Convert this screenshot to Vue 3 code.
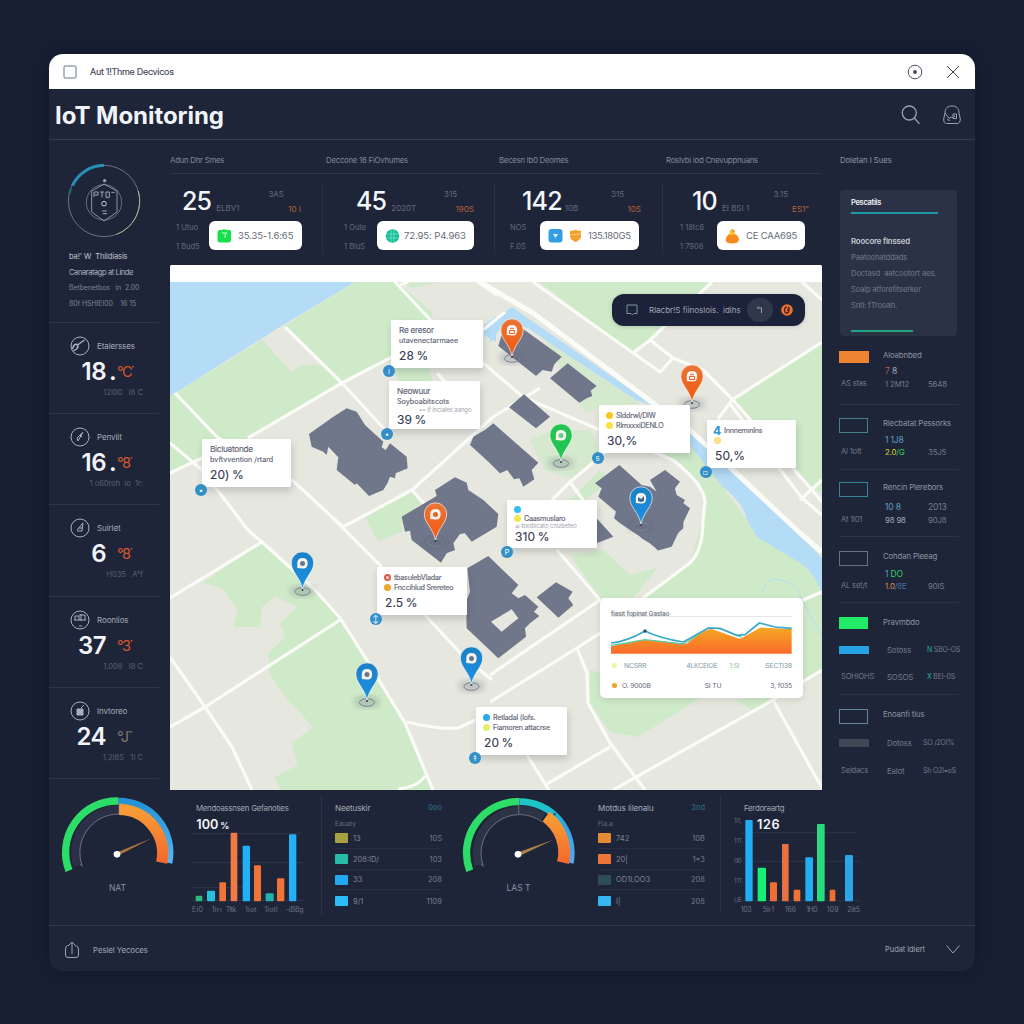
<script setup>
const stats = [
  { n: '25', sub: 'ELBV1', a: '3AS', b: '10 I', l1: '1 Utuo', l2: '1 Bud5', chip: '35.35-1.6:65', icons: ['green'] },
  { n: '45', sub: '2020T', a: '315', b: '190S', l1: '1 Oute', l2: '1 BluS', chip: '72.95: P4.963', icons: ['teal'] },
  { n: '142', sub: '10B', a: '315', b: '10S', l1: 'NOS', l2: 'F.0S', chip: '135.180G5', icons: ['blue', 'shield'] },
  { n: '10', sub: 'EI BSI 1', a: '3.15', b: 'ES1"', l1: '1 18tc6', l2: '1 7908', chip: 'CE CAA695', icons: ['flame'] }
]
const heads = ['Adun Dhr Smes', 'Deccone 16 FiOvhumes', 'Becesn lb0 Deomes', 'Roslvbi lod Cnevuppnuans']

const metrics = [
  { name: 'Etalersses', v: '18', dot: '.', u: '°C˙', sub: '12I00   I8 C', icon: 'needle' },
  { name: 'Penvlit', v: '16', dot: '.', u: '°8˙', sub: '1 o60roh  io  1r:', icon: 'pen' },
  { name: 'Suirlet', v: '6', dot: '', u: '°8˙', sub: 'H035   A°f', icon: 'flask' },
  { name: 'Roonlios', v: '37', dot: '', u: '°3˙', sub: '1,008   I8 C', icon: 'grid' },
  { name: 'Invtoreo', v: '24', dot: '', u: '°J˙˙', sub: '1,2I8S   1I C', icon: 'cup', grey: true }
]

const groups = [
  { cls: 'g1', title: 'Aloabnbed', v: [['7', 'red'], [' 8', 'lite']], l: 'AS stas', m: [['1 2M12', '']], r: '5648', sw: 'fill-orange' },
  { cls: 'g2', title: 'Rlecbatat Pessorks', v: [['1 1J8', 'sky']], l: 'Al 1ott', m: [['2.0', 'yel'], ['/G', 'grn']], r: '35J5', sw: 'line-teal' },
  { cls: 'g3', title: 'Rencin Plerebors', v: [['10 8', 'sky']], vr: '2013', l: 'At 1l01', m: [['98 98', 'lite']], r: '90J8', sw: 'line-cyan' },
  { cls: 'g4', title: 'Cohdan Pleeag', v: [['1 ', 'sky'], ['DO', 'grn']], l: 'AL set/t', m: [['1.0', 'org'], ['/8E', 'blu']], r: '90IS', sw: 'line-grey' }
]

const callouts = [
  { x: 391, y: 320, w: 92, a: 'Re eresor', b: 'utavenectarmaee', v: '28 %', dot: [389, 371], g: 'ı' },
  { x: 389, y: 381, w: 91, a: 'Neowuur', b: 'Soyboabitscots', c: '•• if incialex.aango', v: '39 %', dot: [387, 434], g: '•' },
  { x: 202, y: 439, w: 89, a: 'Bicluatonde', b: 'bvftvvention /rtard', v: '20) %', dot: [201, 490], g: '▪' },
  { x: 599, y: 405, w: 91, a: 'Slddrwl/DIW', b: 'RlmxxxiDENLO', v: '30,%', dot: [597.5, 458], g: 's', i: ['#f7c51d', '#fbe23c'] },
  { x: 707, y: 420, w: 89, a: 'Innnemınlns', b: ' ', v: '50,%', dot: [705.5, 472], g: '▫', i: ['four', '#fbe08a'] },
  { x: 507, y: 500, w: 90, a: ' ', b: 'Caasmuslaro', c: '≡ bxobicato cnulseteo', v: '310 %', dot: [507, 552], g: 'P', i: ['#35bdf0', '#f3e84e'], tall: true },
  { x: 377, y: 567, w: 90, a: 'tbasulebVladar', b: 'Fnccihlud Srereteo', v: '2.5 %', dot: [375.5, 619], g: '↕', i: ['ring', '#efa629'] },
  { x: 476, y: 707, w: 91, a: 'Retladal (lofs.', b: 'Fiamoren attacrse', v: '20 %', dot: [475, 758], g: '‡', i: ['#2aabe2', '#e6ef6a'] }
]

const pins = [
  { x: 512, y: 357, c: 'url(#po)', h: 'lock' },
  { x: 692, y: 403, c: 'url(#po)', h: 'lock' },
  { x: 561, y: 462, c: '#25c452', h: 'drop' },
  { x: 641, y: 525, c: 'url(#pb)', h: 'leaf' },
  { x: 435.5, y: 541, c: 'url(#po)', h: 'ring' },
  { x: 302.5, y: 590, c: 'url(#pb)', h: 'drop' },
  { x: 367, y: 701, c: 'url(#pb)', h: 'drop' },
  { x: 471.5, y: 685, c: 'url(#pb)', h: 'drop' }
]

const bars1 = [
  [452, 20, 331, '#2db87c'], [486, 24, 316, '#27c0dc'], [523, 20, 291, '#ef7437'], [557, 20, 142, '#f17a44'], [593, 22, 181, '#22b0f8'],
  [627, 21, 240, '#ef7437'], [662, 24, 324, '#20b2b4'], [696, 22, 279, '#ef7437'], [732, 22, 147, '#22b0f8']
]
const bars2 = [
  [871, 22, 104, '#22aef4'], [908, 25, 247, '#17f078'], [945, 21, 291, '#ef6f33'], [981, 20, 176, '#e97040'], [1016, 20, 313, '#ef7437'],
  [1051, 23, 216, '#22aef4'], [1086, 23, 116, '#27dc7c'], [1124, 17, 313, '#ef6f33'], [1170, 24, 209, '#2ba6e8']
]
const x1 = [[441, 'Ei0', 33], [500, '1irı', 30], [542, 'Tltk', 32], [600, '1iot', 35], [658, '1lotl', 40], [722, '-iBBg', 54]]
const x2 = [[857, '103', 33], [923, '5lr1', 34], [989, '166', 34], [1054, '1H0', 34], [1115, '109', 36], [1177, '2iit5', 38]]
const y2 = [[107, '1i1,'], [166, '111'], [226, '0i0'], [286, '111'], [343, 'i,iE']]

const listA = [
  { c: '#a8a13f', n: '13', v: '10S' }, { c: '#26bda6', n: '208:ID/', v: '103' },
  { c: '#22a9f3', n: '33', v: '208' }, { c: '#2bbdf8', n: '9/1', v: '1109' }
]
const listB = [
  { c: '#e28b34', n: '742', v: '10B' }, { c: '#ef7437', n: '20|', v: '1*3' },
  { c: '#2f4d59', n: 'OD1I,OO3', v: '208' }, { c: '#36b5f5', n: 'I|', v: '208' }
]
</script>

<template>
  <div class="desk">
    <main class="window">
      <header class="titlebar">
        <svg width="14" height="14" viewBox="0 0 14 14"><rect x="1" y="1" width="12" height="12" rx="1" fill="none" stroke="#6b7280" /></svg>
        <span class="tb-text">Aut 1!Thme Decvicos</span>
        <svg class="push" width="16" height="16" viewBox="0 0 16 16"><circle cx="8" cy="8" r="6.8" fill="none" stroke="#4b5060" /><circle cx="8" cy="8" r="2" fill="#4b5060" /></svg>
        <svg class="close" width="14" height="14" viewBox="0 0 14 14"><path d="M1 1L13 13M13 1L1 13" stroke="#3d4250" fill="none" /></svg>
      </header>

      <div class="header">
        <h1>IoT Monitoring</h1>
        <svg class="push" width="20" height="20" viewBox="0 0 20 20" fill="none" stroke="#9aa0b2" stroke-width="1.3"><circle cx="8.3" cy="8" r="7" /><path d="M13.3 13L18.5 18.7" /></svg>
        <svg class="bag" width="18" height="20" viewBox="0 0 18 20" fill="none" stroke="#9aa0b2"><path d="M2 8C2 3 5 1 9 1S16 3 16 8L17.300 14C17.300 17 16 18.500 14 18.500H3.500C1.500 18.500 .7 17 .7 14Z" /><path d="M2 8L6 13.500 8 12 10 13V9H13.500V13.500H10M11.500 10.500V12M4 14.500L7 15.500" /></svg>
      </div>

      <div class="body">
        <aside class="left">
          <section class="profile">
            <svg width="74" height="76" viewBox="82 350 222 228" fill="none">
              <circle cx="190" cy="467" r="107" stroke="#6a7183" stroke-width="3" />
              <path d="M228 567A107 107 0 0 0 293 437" stroke="#a9b58f" stroke-width="3" />
              <path d="M95 421A107 107 0 0 1 190 360" stroke="#268fb4" stroke-width="9" />
              <path d="M86 447Q88 436 92 429" stroke="#1f6f6f" stroke-width="6" />
              <g stroke="#8d93a5" stroke-width="3"><path d="M190 416L229 437V500L190 527 153 500V437Z" /><circle cx="190" cy="471" r="53" stroke-width="2" /></g>
              <circle cx="192" cy="406" r="5" fill="#9aa0b0" /><circle cx="190" cy="475" r="7" stroke="#c9cdd8" stroke-width="3" />
              <path d="M160 455V440H172V449H162M178 440H190M184 440V456M196 440H206V456H196ZM212 441H222M184 497H198M186 505H199" stroke="#a0a5b5" stroke-width="3" />
            </svg>
            <p class="p1">ba!' W&nbsp; Thildiasis</p>
            <p class="p2">Canaratagp at Linde</p>
            <p class="p3">Betbenetbos&nbsp; &nbsp;in&nbsp; 2.00</p>
            <p class="p4">80f HSHIEI00&nbsp; &nbsp; 16 15</p>
          </section>
          <section v-for="m in metrics" :key="m.name" class="metric">
            <div class="m-head">
              <svg width="20" height="20" viewBox="0 0 20 20" fill="none" stroke="#aab0be">
                <circle cx="10" cy="10" r="9" />
                <path v-if="m.icon === 'needle'" d="M2.500 13Q4 7 7 8.500Q9 11 6.500 13L3.500 15M7.500 9L14.500 4" stroke-width="1.500" />
                <path v-else-if="m.icon === 'pen'" d="M8 14L13 5M10 8L12 10M8 14L7 11 12 6" />
                <path v-else-if="m.icon === 'flask'" d="M7 13H12L13 5L7 12M9 10H12" />
                <path v-else-if="m.icon === 'grid'" d="M5 10V6H9V10M11 4V11M9 5H15V10M4 10H16M9 16H12" />
                <path v-else d="M7 8H13V14H7ZM11 7L14 4" fill="#aab0be" />
              </svg>
              <span>{{ m.name }}</span>
            </div>
            <div class="m-val"><b>{{ m.v }}</b><i>{{ m.dot }}</i><em :class="{ grey: m.grey }">{{ m.u }}</em></div>
            <div class="m-sub">{{ m.sub }}</div>
          </section>
        </aside>

        <section class="center">
          <div class="heads"><span v-for="h in heads" :key="h">{{ h }}</span></div>
          <div class="stats">
            <div v-for="(s, k) in stats" :key="k" class="stat" :class="'s' + k">
              <div class="s-top">
                <span class="num">{{ s.n }}</span><span class="sub">{{ s.sub }}</span>
                <span class="pair"><span>{{ s.a }}</span><span class="org">{{ s.b }}</span></span>
              </div>
              <div class="s-bot">
                <div class="s-lab"><span>{{ s.l1 }}</span><span>{{ s.l2 }}</span></div>
                <div class="chip">
                  <svg v-for="i in s.icons" :key="i" width="15" height="16" viewBox="0 0 15 16">
                    <g v-if="i === 'green'"><path d="M2 2H5L7 1 9 2H13Q14.500 3 14 8V12Q14 14.500 11 14.500H3Q.5 14.500 .5 12V4Z" fill="#18e04a" /><path d="M5 5H10L8 7V10" stroke="#c9ffd6" fill="none" /></g>
                    <g v-else-if="i === 'teal'"><circle cx="7.500" cy="8" r="6.800" fill="#18bd94" /><path d="M6 1V14M9 1V14M1 6L14 6M1 10H14" stroke="#87e6cd" stroke-width=".7" /></g>
                    <g v-else-if="i === 'blue'"><rect x=".5" y="1" width="14" height="13.500" rx="3" fill="#359de4" /><path d="M5 6H10L7.500 10Z" fill="#e9f6ff" /></g>
                    <g v-else-if="i === 'shield'"><path d="M2 3L7 2 13 3V9Q12 12 7.500 14 3 12 2 9Z" fill="#f3a02c" /><path d="M2 7L13 6" stroke="#ffd083" /></g>
                    <g v-else><path d="M7.500 1L10 3 9 5Q14 8 14 12 13 15.500 7.500 15.500 1 15.500 .5 12 1 8 5.500 5L5 3Z" fill="#f58a1f" /><path d="M6 2L9 4 11 7H4Z" fill="#f8c12c" /></g>
                  </svg>
                  <span>{{ s.chip }}</span>
                </div>
              </div>
            </div>
          </div>

          <div class="map">
            <svg class="land" width="652" height="525" viewBox="170 265 652 525">
              <defs>
                <linearGradient id="po" x2="0" y2="1"><stop stop-color="#e97636" /><stop offset="1" stop-color="#f4560f" /></linearGradient>
                <linearGradient id="pb" x2="0" y2="1"><stop stop-color="#1c80c4" /><stop offset="1" stop-color="#1d91e4" /></linearGradient>
                <filter id="soft"><feGaussianBlur stdDeviation="3" /></filter>
              </defs>
              <rect x="170" y="265" width="652" height="525" fill="#e6e7de" />
              <path d="M170 282H355L283 325 175 393 170 396Z" fill="#b4dcf7" />
              <g fill="#cfeac8">
                <path d="M355 282H397L432 312V341L342 384 248 438 202 458 170 473V396L262 340 292 372 298 367Q310 362 328 368L284 326Z" />
                <path d="M392 362L428 368 433 380 400 384Z M405 284L412 288 440 282Z M540 282H712L633 354Z" />
                <path d="M365 517L410 491 421 503 403 518 402 532 378 541Z" />
                <path d="M260 542L203 583 222 588 238 610 233 627H260L262 607 275 597 298 607 280 623 285 637 268 653 270 675 288 700 313 727 292 743 298 765 275 777 280 790H431L405 723 368 662 340 618 315 590Z" />
                <path d="M540 330L560 350 640 403 600 408 585 412 562 370Z M530 440L552 430 590 430 600 450 575 480 545 470Z" opacity=".8" />
                <path d="M600 440L673 460 700 483 705 503 703 520 690 563 643 598H803L822 592V565L747 520 723 487 690 443Z M590 670L700 698 638 737 610 732 590 703Z M735 700L755 712 822 672V590H803V690Z" />
                <path d="M570 500L600 470 612 480 575 507Z M570 555L603 550 630 575 657 568 633 598H600Z M735 400L822 341V492L812 487Z" />
              </g>
              <path d="M490 322L512 307 640 396 650 405 636 400 560 350 528 328 505 322 490 343Z M687 428L705 440 822 558V592Q812 570 800 563L757 537 747 520Q745 505 723 487L690 445Z M484 325L496 316V342L484 335Z" fill="#b4dcf7" />
              <path d="M762 592Q766 575 782 580T802 600L822 636" stroke="#b4dcf7" fill="none" />
              <g fill="none" stroke="#fbfcf8" stroke-width="3.200" stroke-linejoin="round">
                <path d="M175 393L218 438 292 480 343 527 M285 327L342 383 387 432 M170 443L202 470 248 530 262 542 315 590 340 618 368 662 405 723 433 790 M170 473L202 458 M248 438L342 383 392 357 M170 598L262 542 M170 727L205 707 340 620 M170 657L205 707 232 747 252 790" />
                <path d="M334 519L378 563 427 617 462 655 492 680 M343 527L412 490 493 417 540 388 M412 490L425 505 M407 722Q440 730 458 728L480 718 M490 675L600 600 M643 598L690 563Q703 550 703 520L705 503Q705 485 673 460L600 430 523 397 483 363 438 328 395 282 M400 285L408 282 M437 373L470 408 M478 282L497 295 M483 330L505 312" />
                <path d="M533 282L660 372 673 358 M633 353L650 340 712 282 M650 340L673 358 703 370 732 399 812 490 822 502 M732 400L822 342 M732 400L718 419 M802 282L822 300 M730 404L802 498 822 515 M800 500L822 480" />
                <path d="M613 790L773 700 822 670 M773 700L822 788 M490 702L577 648 605 630 M577 648L587 673 588 703 610 743 645 790 M547 784L610 747 M527 755L549 790 M557 550L600 600 M803 600L822 592 M620 440L570 482 552 500 M570 482L583 500 M398 789Q418 787 425 776" />
                <path d="M478 281L533 313 653 403 690 430 800 533 822 552" stroke-width="5" />
              </g>
              <g fill="#70778b">
                <g transform="translate(165 260) scale(.33333)">
                  <path d="M545 445L575 455 600 495 655 545 650 562 662 570 675 550 725 590 728 625 692 640 690 655 675 650 668 668 655 690 612 708 575 670 570 675 515 630 520 592 490 560 485 585 475 575 440 560 432 522 505 470Z" />
                  <path d="M870 652L905 668 910 690 955 720 1000 762 995 800 920 845 900 820 885 822 865 850 870 870 845 880 828 908 740 840 735 812 720 815 710 770 815 708 810 690Z" />
                </g>
                <g transform="translate(490 270) scale(.33333)">
                  <path d="M90 170L215 260 193 283 185 305 158 300 138 318 25 228 35 195Z M233 280L320 348 302 362 307 378 290 385 268 398 180 325Z M102 373L180 440 138 475 57 412Z" />
                  <path d="M10 460L145 578 125 600 133 628 100 650 88 625 72 628 52 600 30 610 -5 575 -60 525 -50 500 -15 480Z" />
                  <path d="M388 585L455 645 480 650 500 665 480 630 525 600 570 635 555 655 560 675 585 690 580 700 600 715 545 830 510 840 390 760 372 745 378 725 325 680 335 655 315 640Z M320 745L370 800 320 820Z" />
                </g>
                <g transform="translate(490 520) scale(.33333)">
                  <path d="M198 187L248 215 235 235 250 255 205 293 140 232Z M410 0H580L580 25 505 92 480 70 455 55Z" />
                  <path d="M-68 145L-5 108 85 195 65 220 85 235 105 225 145 260 132 275 148 288 120 310 105 325 108 350 25 415 -70 325 -72 245 -60 215ZM65 268L3 305 35 335 85 295Z" fill-rule="evenodd" />
                </g>
              </g>
              <g v-for="(p, k) in pins" :key="k" :transform="`translate(${p.x} ${p.y})`">
                <ellipse cy="1" rx="13" ry="6" fill="#555d70" opacity=".28" filter="url(#soft)" />
                <ellipse rx="7.500" ry="3.800" cy="1.500" fill="none" stroke="#7b8292" stroke-width="1" />
                <path d="M0 -1C-3 -14-11.200 -18-11.200 -27A11.200 11.200 0 0 1 11.200 -27C11.200 -18 3 -14 0 -1Z" :fill="p.c" stroke="#fff" stroke-opacity=".65" stroke-width="1" />
                <path d="M-5.200 -22V-27Q-5 -32 0 -32T5.200 -27Q5.200 -21 0 -21.500Z" fill="#f7f3ee" />
                <path v-if="p.h === 'lock'" d="M-2 -28Q0 -30 2 -28M-2.500 -26.500H2.500V-23.500H-2.500Z" fill="none" stroke="#e8632a" />
                <circle v-else-if="p.h === 'ring'" cy="-26.500" r="2.500" fill="#e8632a" />
                <path v-else-if="p.h === 'leaf'" d="M-3 -24V-28L0 -26 3 -29V-24L0 -23Z" fill="#33669a" />
                <circle v-else cy="-26.500" r="2.500" :fill="p.c === '#25c452' ? '#5fcf80' : '#66788f'" />
                <circle cy="0" r="1" fill="#343b4d" />
              </g>
            </svg>
            <div class="strip"></div>

            <div v-for="(c, k) in callouts" :key="'c' + k" class="callout" :class="{ wide: !c.i, tall: c.tall, noted: c.c }" :style="{ left: c.x - 170 + 'px', top: c.y - 265 + 'px', width: c.w + 'px' }">
              <div class="row">
                <span v-if="c.i && c.i[0] === 'four'" class="four">4</span>
                <span v-else-if="c.i && c.i[0] === 'ring'" class="ring"></span>
                <span v-else-if="c.i" class="ball" :style="{ background: c.i[0] }"></span>
                <span>{{ c.a }}</span>
              </div>
              <div class="row r2">
                <span v-if="c.i" class="ball" :style="{ background: c.i[1] }"></span>
                <span>{{ c.b }}</span>
              </div>
              <div v-if="c.c" class="faint">{{ c.c }}</div>
              <div class="val">{{ c.v }}</div>
            </div>
            <span v-for="(c, k) in callouts" :key="'d' + k" class="tag" :style="{ left: c.dot[0] - 176 + 'px', top: c.dot[1] - 271 + 'px' }">{{ c.g }}</span>

            <div class="pill">
              <svg width="12" height="12" viewBox="0 0 12 12" fill="none" stroke="#7f93a8"><path d="M1 1H11V9.500H8L6.500 11 5 9.500H1Z" /></svg>
              <span>Rlacbr!S fiinoslois.&nbsp; idihs</span>
              <b><svg width="8" height="8" viewBox="0 0 8 8" fill="none" stroke="#9ca2b1"><path d="M1 2H5.500V7M2.500 .5L1 2" /></svg></b>
              <i><svg width="12" height="12" viewBox="0 0 12 12"><circle cx="6" cy="6" r="5.800" fill="#f0722f" /><path d="M6 3Q3.500 3 3.500 6T6 9Q8 9 8 6V3L6.500 7" stroke="#50251b" fill="none" stroke-width="1.300" /></svg></i>
            </div>

            <div class="mini">
              <div class="mini-head"><span>fiasit fopinat Gastao</span></div>
              <svg width="181" height="36" viewBox="363 295 543 108">
                <defs><linearGradient id="ar" x2="0" y2="1"><stop stop-color="#f5a821" /><stop offset="1" stop-color="#fb6a2c" /></linearGradient></defs>
                <path d="M363 380L410 370 465 360 560 370 590 372Q640 330 665 328L750 358 810 324 905 328V402H363Z" fill="url(#ar)" />
                <path d="M363 377L410 370 465 360 580 373 655 325 690 327 755 353" fill="none" stroke="#5fc9a0" stroke-width="4" />
                <path d="M363 370Q410 366 465 334 510 356 580 367L655 325 690 326 740 347 765 345 808 310 855 322 905 326" fill="none" stroke="#3ba7c9" stroke-width="5" />
                <circle cx="465" cy="334" r="5" fill="#28506a" />
              </svg>
              <div class="mini-row teal"><i class="pale"></i><span>NCSRR</span><span class="m2">4LKCEIOE</span><span class="m3">1:SI</span><span class="end">SECTI38</span></div>
              <div class="mini-row"><i class="amber"></i><span>O. 9000B</span><span class="m4">SI TU</span><span class="end">3, f035</span></div>
            </div>
          </div>
        </section>

        <aside class="right">
          <p class="r-head">Doletan I Sues</p>
          <div class="card">
            <b>Pescatils</b><hr />
            <strong>Roocore flnssed</strong>
            <p>Paatoohatddads</p><p class="w2">Doctasd&nbsp; aatcootort aes.</p><p class="w3">Soalp atforefitserker</p><p class="w4">Sntl: fTrooah.</p>
            <hr class="short" />
          </div>
          <section v-for="g in groups" :key="g.cls" class="group" :class="g.cls">
            <div class="swatch" :class="g.sw"></div>
            <div class="g-title">{{ g.title }}</div>
            <div class="g-v"><span><span v-for="(t, k) in g.v" :key="k" :class="t[1]">{{ t[0] }}</span></span><span class="gr">{{ g.vr }}</span></div>
            <div class="g-l">{{ g.l }}</div>
            <div class="g-m"><span><span v-for="(t, k) in g.m" :key="k" :class="t[1]">{{ t[0] }}</span></span><span class="gr">{{ g.r }}</span></div>
          </section>
          <section class="group g5">
            <div class="swatch fill-green"></div><div class="g-title">Pravmbdo</div>
            <div class="swatch fill-blue"></div><div class="g-v"><span>Sotoss</span><span class="gr"><em>N</em> SBO-OS</span></div>
            <div class="g-l">SOHIOHS</div><div class="g-m"><span>SOSOS</span><span class="gr"><em>X</em> BEI-0S</span></div>
          </section>
          <section class="group g6">
            <div class="swatch line-cy2"></div><div class="g-title">Enoanfi tlus</div>
            <div class="swatch fill-grey"></div><div class="g-v"><span>Dotoss</span><span class="gr nu">SO /2OI%</span></div>
            <div class="g-l">Seidacs</div><div class="g-m"><span>Ealot</span><span class="gr nu">Sh O2l•oS</span></div>
          </section>
        </aside>
      </div>

      <div class="bottom">
        <div class="gauge">
          <svg width="115" height="80" viewBox="45 32 345 240" fill="none">
            <path d="M98 243A130 130 0 0 1 220 76" stroke="#2c3047" stroke-width="28" />
            <path d="M72 259A154 154 0 0 1 220 50" stroke="#2cde68" stroke-width="22" />
            <path d="M220 50A154 154 0 0 1 372 236" stroke="url(#gb)" stroke-width="20" />
            <path d="M222 75A132 132 0 0 1 350 235" stroke="url(#go)" stroke-width="34" />
            <path d="M111 243A116 116 0 0 1 222 89M105 240L114 246M222 42V90M316 92L324 82" stroke="#8a8fa0" stroke-width="2" />
            <path d="M213 205L320 162 221 213Z" fill="#b4713e" /><circle cx="216" cy="210" r="10" fill="#fff" />
            <defs>
              <linearGradient id="gb" x2="0" y2="1"><stop stop-color="#2492d4" /><stop offset="1" stop-color="#5ab5f5" /></linearGradient>
              <linearGradient id="go" x2="0" y2="1"><stop stop-color="#f99c36" /><stop offset="1" stop-color="#f5692b" /></linearGradient>
              <linearGradient id="gt" x2="0" y2="1"><stop stop-color="#1cc8c2" /><stop offset=".4" stop-color="#2da6e6" /><stop offset="1" stop-color="#5aa5ee" /></linearGradient>
            </defs>
          </svg>
          <span>NAT</span>
        </div>

        <div class="bars b1">
          <h3>Mendoassnsen Gefanoties</h3>
          <svg width="115" height="104" viewBox="438 86 345 312">
            <path d="M441 145H770M441 232H775M441 307H600M441 345H778" stroke="#2e364b" stroke-width="3" />
            <text class="big" x="454" y="130">100 <tspan class="pct" dx="-4">%</tspan></text>
            <rect v-for="b in bars1" :key="b[0]" :x="b[0]" :y="b[2]" :width="b[1]" :height="348 - b[2]" rx="3" :fill="b[3]" />
            <text v-for="t in x1" :key="t[0]" :x="t[0]" y="380" :textLength="t[2]" class="tick">{{ t[1] }}</text>
          </svg>
        </div>

        <div class="list la">
          <div class="l-head"><b>Neetuskir</b><span>0oo</span></div>
          <div class="l-sub">Eauaty</div>
          <div v-for="r in listA" :key="r.n" class="l-row"><i :style="{ background: r.c }"></i><span>{{ r.n }}</span><em>{{ r.v }}</em></div>
        </div>

        <div class="gauge gb2">
          <svg width="115" height="80" viewBox="15 32 345 240" fill="none">
            <path d="M68 243A130 130 0 0 1 262 98" stroke="#2c3344" stroke-width="26" />
            <path d="M41 259A154 154 0 0 1 190 52" stroke="#2cde68" stroke-width="22" />
            <path d="M190 52A154 154 0 0 1 343 236" stroke="url(#gt)" stroke-width="20" />
            <path d="M270 97A132 132 0 0 1 321 235" stroke="url(#go)" stroke-width="36" />
            <path d="M81 243A116 116 0 0 1 258 112M75 240L84 246M188 42V88" stroke="#8a8fa0" stroke-width="2" /><circle cx="296" cy="90" r="4" fill="#145d8e" />
            <path d="M183 205L292 166 190 215Z" fill="#b08048" /><circle cx="186" cy="210" r="10" fill="#fff" />
          </svg>
          <span>LAS T</span>
        </div>

        <div class="list lb">
          <div class="l-head"><b>Motdus lilenalu</b><span>3nd</span></div>
          <div class="l-sub">Fia.a</div>
          <div v-for="r in listB" :key="r.n" class="l-row"><i :style="{ background: r.c }"></i><span>{{ r.n }}</span><em>{{ r.v }}</em></div>
        </div>

        <div class="bars b2">
          <h3>Ferdoraartg</h3>
          <svg width="130" height="104" viewBox="834 86 390 312">
            <path d="M862 142H1203M862 228H1216M862 346H1216" stroke="#2e364b" stroke-width="3" />
            <text class="big" x="906" y="131" textLength="68">126</text>
            <text v-for="t in y2" :key="t[0]" x="838" :y="t[0] + 7" textLength="22" class="tick sm">{{ t[1] }}</text>
            <rect v-for="b in bars2" :key="b[0]" :x="b[0]" :y="b[2]" :width="b[1]" :height="348 - b[2]" rx="3" :fill="b[3]" />
            <text v-for="t in x2" :key="t[0]" :x="t[0]" y="380" :textLength="t[2]" class="tick">{{ t[1] }}</text>
          </svg>
        </div>
      </div>

      <footer class="footer">
        <svg width="16" height="18" viewBox="0 0 16 18" fill="none" stroke="#9aa0b2"><path d="M5 4.500H3.500Q1.500 5 1.500 8V14Q1.500 16.500 4 16.500H12Q14.500 16.500 14.500 14V8Q14.500 5 11 4.500M8 13V1.500M4.500 4.500L8 1 11.500 4.500" /></svg>
        <span>Peslel Yecoces</span>
        <span class="push">Pudat ldiert</span>
        <svg width="14" height="9" viewBox="0 0 14 9" fill="none" stroke="#9aa0b2"><path d="M.5 .5L7 8 13.500 .5" /></svg>
      </footer>
    </main>
  </div>
</template>

<style>
body { background: #171e32; }
</style>

<style scoped>
* { box-sizing: border-box; }
p, h1, h3 { margin: 0; font-weight: 400; }
.desk { width: 1024px; height: 1024px; padding: 54px 49px 53px; background: #171e32; font-family: Inter, "DejaVu Sans", sans-serif; color: #8e94a5; font-size: 7.5px; overflow: hidden; }
.window { width: 926px; height: 917px; border-radius: 14px; background: #1e2538; overflow: hidden; display: flex; flex-direction: column; box-shadow: 0 0 12px rgba(10, 14, 28, .35); }
.push { margin-left: auto; }
.titlebar { height: 35px; flex: none; background: #fff; display: flex; align-items: center; padding: 0 15px 0 14px; color: #454a58; }
.tb-text { margin-left: 13px; font-size: 9px; letter-spacing: -.3px; -webkit-text-stroke: .15px; }
.titlebar .push { margin-right: 1px; }
.close { margin-left: 22px; }
.header { height: 51px; flex: none; display: flex; align-items: center; padding: 2px 14px 0 6px; border-bottom: 1px solid #363d50; }
h1 { color: #f1f3fa; font-size: 24px; font-weight: 700; letter-spacing: -.05px; }
.bag { margin-left: 22px; }
.body { height: 649px; flex: none; display: flex; }
.left { width: 121px; padding-right: 11px; }
.profile { height: 183px; padding: 22px 0 0 19px; border-bottom: 1px solid #2f3649; }
.profile svg { display: block; margin-bottom: 11px; }
.profile p { height: 15.700px; line-height: 16px; padding-left: 1px; font-size: 7.500px; white-space: pre; color: #9298a8; letter-spacing: -.1px; }
.profile .p1 { color: #c2c6d1; font-size: 7.500px; }
.profile .p2 { color: #b0b5c2; letter-spacing: -.4px; }
.profile .p4, .profile .p3 { color: #7c8395; font-size: 7px; }
.metric { height: 91.200px; border-bottom: 1px solid #2f3649; padding-top: 13px; white-space: pre; }
.m-head { display: flex; align-items: center; gap: 7px; padding-left: 21px; height: 20px; color: #a7adba; font-size: 8px; letter-spacing: -.1px; }
.m-val { display: flex; height: 32px; line-height: 32px; font-size: 24px; color: #f2f4fa; }
.m-val b { width: 57px; text-align: right; font-weight: 600; letter-spacing: -.5px; }
.m-val i { width: 10px; padding-left: 3px; font-style: normal; font-weight: 600; }
.m-val em { font-style: normal; color: #d9572f; font-size: 14.500px; letter-spacing: -1.500px; padding-left: 1px; }
.m-val em.grey { color: #7f776f; }
.m-sub { color: #596073; font-size: 7.500px; text-align: right; padding-right: 16px; line-height: 10px; }
.center { width: 652px; }
.heads { height: 34px; padding-top: 7px; border-bottom: 1px solid #2f3649; display: grid; grid-template-columns: 156px 173px 167px 1fr; align-items: center; font-size: 7.800px; letter-spacing: -.25px; color: #81889a; }
.stats { height: 91px; display: grid; grid-template-columns: 153px 172px 168px 159px; padding-top: 8px; }
.stat { height: 72px; border-right: 1px solid #2b3246; padding-left: 12px; font-size: 8px; color: #646b7e; }
.stat:last-child { border-right: 0; }
.s1 { padding-left: 33px; } .s2 { padding-left: 27px; } .s3 { padding-left: 29px; }
.s-top { height: 40px; display: flex; align-items: center; }
.num { font-size: 25px; font-weight: 500; color: #f4f6fc; letter-spacing: -.8px; line-height: 30px; margin-top: -3px; }
.sub { padding: 12px 0 0 5px; }
.s2 .sub { padding-left: 3px; }
.pair { margin-left: auto; width: 46px; display: flex; flex-direction: column; gap: 5px; padding: 0 21px 0 0; align-items: flex-end; white-space: nowrap; line-height: 10px; margin-top: -2px; }
.pair span:first-child { padding-right: 17px; }
.s1 .pair { padding-right: 20px; } .s2 .pair { padding-right: 21px; } .s3 .pair { padding-right: 13px; } .s3 .pair span:first-child { padding-right: 21px; }
.pair .org { color: #b76136; }
.s-bot { display: flex; margin-left: -12px; height: 30px; }
.s-lab { width: 39px; padding-left: 6px; display: flex; flex-direction: column; gap: 9px; line-height: 10px; font-size: 7.500px; padding-top: 1px; flex: none; white-space: nowrap; }
.chip { height: 29px; width: 93px; margin-top: -1px; border-radius: 6px; background: #fff; display: flex; align-items: center; gap: 6px; padding-left: 8px; color: #656b78; font-size: 9.500px; white-space: nowrap; letter-spacing: -.1px; flex: none; }
.s1 .chip { width: 97px; font-size: 9.500px; gap: 4px; } .s2 .chip { width: 99px; margin-left: -3px; gap: 5px; letter-spacing: -.35px; } .s3 .chip { width: 88px; margin-left: 4px; letter-spacing: -.2px; }
.s1 .s-bot { margin-left: -18px; } .s2 .s-bot, .s3 .s-bot { margin-left: -18px; }
.map { position: relative; width: 652px; height: 525px; border-radius: 2px 2px 0 0; overflow: hidden; }
.land { display: block; }
.strip { position: absolute; left: 0; top: 0; width: 100%; height: 17px; background: #fff; }
.callout { position: absolute; height: 48px; background: #fff; padding: 5px 0 0 6px; border-radius: 1px; color: #5b6172; font-size: 7.200px; letter-spacing: -.25px; box-shadow: 1px 4px 7px rgba(60, 65, 75, .22); white-space: nowrap; -webkit-text-stroke: .12px; }
.wide { padding-left: 8px; }
.row { display: flex; align-items: center; gap: 3px; height: 10.500px; }
.wide .row:first-child { font-size: 8.200px; letter-spacing: -.25px; }
.wide .r2 { letter-spacing: 0; }
.ball, .ring { width: 7px; height: 7px; border-radius: 50%; margin-left: 1px; }
.ring { border: 2px solid #d95b45; background: #fbd9d0; }
.four { color: #3193d5; font-size: 12px; font-weight: 700; width: 8px; }
.faint { font-size: 6px; color: #a0a4ae; height: 6px; line-height: 6px; letter-spacing: -.1px; padding-left: 2px; -webkit-text-stroke: 0; }
.wide .faint { padding-left: 22px; }
.val { font-size: 12px; color: #333a51; line-height: 15px; padding: 2px 0 0 2px; letter-spacing: .1px; word-spacing: -1px; }
.wide .val { padding-left: 0; }
.wide.noted .val { padding-top: 0; line-height: 13px; }
.tall .row { height: 9px; } .tall .val { padding-top: 0; }
.tag { position: absolute; width: 12px; height: 12px; border-radius: 50%; background: #338fc8; color: #e9f7ff; font-size: 8px; line-height: 12px; text-align: center; }
.pill { position: absolute; left: 442px; top: 29px; width: 193px; height: 32px; border-radius: 12px; background: #1b2239; display: flex; align-items: center; padding-left: 14px; color: #a2a7b6; font-size: 8px; letter-spacing: 0; white-space: nowrap; box-shadow: 0 1px 4px rgba(0, 0, 0, .15); }
.pill span { width: 98px; margin-left: 11px; }
.pill b { width: 26px; height: 24px; border-radius: 12px; background: #30374b; display: grid; place-items: center; }
.pill i { margin-left: 8px; display: flex; }
.mini { position: absolute; left: 430px; top: 333px; width: 203px; height: 100px; border-radius: 5px; background: #fff; padding: 11px 11px 0; color: #656b79; box-shadow: 0 2px 6px rgba(60, 70, 70, .15); }
.mini-head { height: 8px; display: flex; border-bottom: 1px solid #e5e6ea; font-size: 6.200px; line-height: 9px; -webkit-text-stroke: .15px; }
.mini svg { display: block; margin-top: 1px; }
.mini-row { display: flex; align-items: center; height: 20px; font-size: 6.800px; letter-spacing: -.2px; }
.mini-row.teal { color: #7d9aa3; margin-top: 1px; }
.mini-row i { width: 5px; height: 5px; border-radius: 2px; background: #f0a52d; margin: 0 5px 0 1px; }
.mini-row .pale { background: #f1f5a5; margin-right: 7px; }
.m2 { margin-left: 40px; } .m3 { margin-left: 12px; color: #8fbf9c; } .m4 { margin-left: 54px; } .end { margin-left: auto; }
.right { width: 153px; padding: 13px 18px 0 17px; }
.r-head { height: 14px; line-height: 14px; font-size: 7.800px; letter-spacing: -.1px; padding-left: 1px; }
.card { margin-top: 23px; height: 146px; background: #2b3246; border-radius: 4px; padding: 7px 11px 0; margin-left: 1px; margin-right: -1px; display: flex; flex-direction: column; white-space: nowrap; color: #717889; font-size: 7.600px; letter-spacing: -.15px; line-height: 16px; width: 117px; }
.card b { color: #f0f2f8; font-size: 7.500px; line-height: 11px; font-weight: 600; letter-spacing: -.3px; }
.card hr { width: 87px; height: 2px; border: 0; margin: 4px 0 21px; background: #1e9aa6; flex: none; }
.card strong { color: #c7cad4; font-weight: 600; font-size: 7.800px; line-height: 12px; margin-bottom: 3px; }
.card p { height: 16.100px; }
.card .w2 { letter-spacing: -.1px; }
.card hr.short { width: 62px; background: #20a583; margin: 16px 0 0; }
.group { display: grid; grid-template-columns: 44px 1fr; border-bottom: 1px solid #2c3347; width: 120px; font-size: 7.500px; color: #737a8c; line-height: 10px; letter-spacing: -.15px; align-content: start; white-space: pre; }
.group:last-child { border-bottom: 0; }
.g1 { height: 69px; padding-top: 14px; grid-template-rows: 16px 13px 12px; }
.g2 { height: 65px; padding-top: 13px; grid-template-rows: 17px 12px 12px; }
.g3 { height: 67px; padding-top: 12px; grid-template-rows: 20px 13px 12px; }
.g4 { height: 66px; padding-top: 14px; grid-template-rows: 18px 12px 12px; }
.g5 { height: 92px; padding-top: 14px; grid-template-rows: 28px 27px 20px; }
.g6 { height: 86px; padding-top: 14px; grid-template-rows: 29px 28px 20px; }
.g-title { color: #8d93a4; font-size: 7.800px; }
.g-v, .g-m { display: flex; font-size: 8.500px; }
.g-m, .g5 .g-v, .g6 .g-v { font-size: 7.800px; }
.g-v { grid-column: 2; }
.g-v > span:first-child, .g-m > span:first-child { width: 45px; padding-left: 2px; }
.g5 .g-v > span:first-child, .g5 .g-m > span:first-child, .g6 .g-v > span:first-child, .g6 .g-m > span:first-child { width: 44px; padding-left: 4px; }
.g5 .gr, .g6 .gr { font-size: 7px; letter-spacing: -.2px; }
.g-v .nu, .g-m .nu { margin-left: -4px; }
.g-l { grid-column: 1; padding-left: 2px; }
.gr em { font-style: normal; color: #28a99a; }
.swatch { width: 29px; height: 15px; grid-column: 1; border: 1px solid transparent; }
.g1 .swatch { height: 12px; width: 30px; margin-top: 1px; }
.g5 .swatch { height: 12px; } .g5 .fill-blue { height: 8px; width: 30px; margin-top: 1px; } .g6 .fill-grey { height: 8px; width: 30px; margin-top: 1px; }
.fill-orange { background: #ee8432; } .fill-green { background: #20ea66; } .fill-blue { background: #25a3e4; } .fill-grey { background: #414654; }
.line-teal { border-color: #47808a; } .line-cyan { border-color: #33849a; } .line-grey { border-color: #687287; } .line-cy2 { border-color: #63879a; }
.red { color: #b45c48; } .lite { color: #a2aab8; } .sky { color: #5d9dc2; } .yel { color: #d3cc34; } .grn { color: #2ed05c; } .org { color: #df9148; } .blu { color: #466fa9; }
.bottom { height: 136px; flex: none; display: flex; padding-top: 6px; }
.gauge { width: 141px; padding-left: 11px; }
.gauge svg { display: block; }
.gauge span { display: block; width: 115px; text-align: center; margin-top: 7px; font-size: 8.500px; line-height: 12px; color: #8c92a3; }
.bars h3 { font-size: 7.800px; line-height: 12px; height: 18px; padding-top: 7px; letter-spacing: -.25px; color: #a0a5b3; white-space: nowrap; }
.bars svg { display: block; margin-top: 1px; }
.b1 { width: 132px; height: 120px; border-right: 1px solid #2b3247; }
.b1 h3 { padding-left: 6px; } .b1 svg { margin-left: 1px; }
.big { font-size: 38px; font-weight: 600; fill: #f3f4f8; font-family: Inter, sans-serif; }
.pct { font-size: 27px; }
.tick { font-size: 21px; fill: #6c7385; } .sm { font-size: 17px; }
.list { width: 120px; padding: 7px 0 0 13px; font-size: 7.500px; color: #7e8496; }
.l-head { display: flex; justify-content: space-between; height: 12px; line-height: 12px; }
.l-head b { font-weight: 400; font-size: 8px; color: #a9aebb; letter-spacing: -.1px; }
.l-head span { color: #347491; }
.l-sub { height: 14px; line-height: 20px; font-size: 6.500px; color: #666d7f; }
.l-row { height: 20.800px; display: flex; align-items: center; border-bottom: 1px solid #282f43; padding-top: 1px; }
.l-row:last-child { border-bottom: 0; }
.l-row i { width: 13px; height: 10px; margin-right: 5px; border-radius: 1px; }
.l-row em { margin-left: auto; font-style: normal; color: #757c8e; }
.gb2 { width: 142px; padding-left: 19px; }
.la { width: 120px; }
.lb { width: 137px; padding-right: 15px; padding-left: 14px; border-right: 1px solid #2b3247; height: 118px; }
.b2 { padding-left: 12px; } .b2 h3 { padding-left: 11px; }
.footer { height: 46px; flex: none; border-top: 1px solid #30384c; display: flex; align-items: center; padding: 2px 15px 0; font-size: 7.800px; color: #a0a5b3; letter-spacing: -.05px; }
.footer > span:nth-child(2) { margin-left: 13px; }
.footer .push { margin-right: 21px; font-size: 7.500px; }
</style>
